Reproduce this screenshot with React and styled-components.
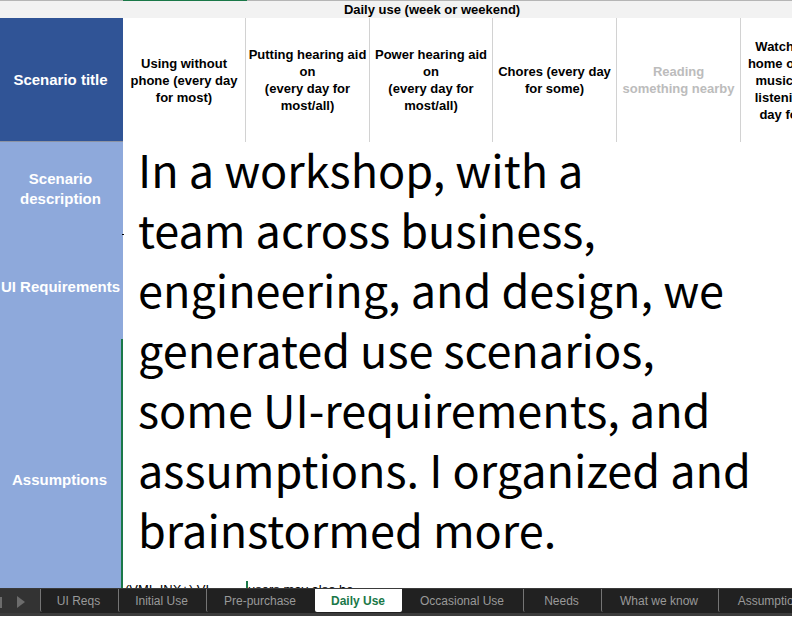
import React from "react";
import styled, { createGlobalStyle } from "styled-components";

const GlobalStyle = createGlobalStyle`
  * { box-sizing: border-box; }
  body { margin: 0; background: #fff; font-family: "Liberation Sans", Arial, sans-serif; }
`;

const Page = styled.div`
  display: flex;
  flex-direction: column;
  height: 100vh;
  padding-bottom: 5px;
  overflow: hidden;
`;

const Sheet = styled.main`
  flex: 1;
  min-height: 0;
  overflow: hidden;
`;

const Grid = styled.table`
  width: 109%;
  min-width: 864px;
  table-layout: fixed;
  border-collapse: separate;
  border-spacing: 0;
`;

const Column = styled.col`
  width: ${(p) => p.$width}px;
`;

const Band = styled.th`
  height: 18px;
  padding: 0;
  background: #f2f2f2;
  border-top: 1px solid #b5b5b5;
`;

const BandTitle = styled(Band)`
  position: relative;
  padding-top: 1px;
  font-size: 13px;
  line-height: 16px;

  &::before {
    content: "";
    position: absolute;
    top: -1px;
    left: 0;
    width: 20%;
    height: 1px;
    background: #1a7848;
  }
`;

const ScenarioHead = styled.th`
  height: 123px;
  padding: 0 2px;
  border-right: 1px solid #d2d2d2;
  color: ${(p) => (p.$muted ? "#bcbcbc" : "#000")};
  font-size: 13px;
  line-height: 17px;
  white-space: pre-line;
`;

const RowHead = styled.th`
  position: relative;
  height: ${(p) => p.$height}px;
  padding: 0 2px 0 0;
  background: ${(p) => (p.$primary ? "#305496" : "#8ea9db")};
  border-bottom: ${(p) => (p.$primary ? "1px solid #8c93a3" : "0")};
  border-right: ${(p) => (p.$selected ? "2px solid #1a7848" : "0")};
  color: #fff;
  font-size: 15px;
  line-height: 20px;
`;

const DescriptionHead = styled(RowHead)`
  &::after {
    content: "";
    position: absolute;
    right: -1px;
    bottom: 0;
    width: 2px;
    height: 1px;
    background: #000;
  }
`;

const NoteCell = styled.td`
  padding: 0;
  vertical-align: top;
`;

const Note = styled.p`
  margin: -3px 0 0;
  padding: 0 0 22px 15px;
  font-family: "Noto Sans CJK SC", "Noto Sans", sans-serif;
  font-size: 45px;
  line-height: 60px;
  white-space: pre-line;
`;

const CellTexts = styled.div`
  display: grid;
  grid-template-columns: 121px 1fr;
  padding-left: 2px;
  font-size: 13px;
  line-height: 17px;
`;

const CellText = styled.span`
  border-left: ${(p) => (p.$selected ? "2px solid #1a7848" : "0")};
`;

const TabBar = styled.nav`
  display: flex;
  flex: none;
  height: 28px;
  overflow: hidden;
  background: #212121;
  border-top: 1px solid #3a3a3a;
  border-bottom: 3px solid #3c3c3c;
`;

const Scrollers = styled.div`
  display: flex;
  flex: none;
  width: 40px;
  background: #333;
`;

const ScrollButton = styled.button`
  width: ${(p) => p.$width}px;
  padding: 2px 0 0;
  border: 0;
  background: none;
  line-height: 0;
`;

const Tab = styled.button`
  flex: none;
  width: ${(p) => p.$width}px;
  height: 23px;
  padding: 0 2px 0 0;
  border: 0;
  border-left: 1px solid ${(p) => (p.$divider ? "#757575" : "transparent")};
  border-radius: 0 0 2px 2px;
  background: ${(p) => (p.$active ? "#fff" : "none")};
  color: ${(p) => (p.$active ? "#1a7848" : "#999")};
  font-family: "Liberation Sans", Arial, sans-serif;
  font-size: 12px;
  font-weight: ${(p) => (p.$active ? 700 : 400)};
  white-space: nowrap;
`;

const columns = [123, 123, 124, 123, 124, 124, 123];

const scenarios = [
  { title: "Using without phone (every day for most)" },
  { title: "Putting hearing aid on\n(every day for most/all)" },
  { title: "Power hearing aid on\n(every day for most/all)" },
  { title: "Chores (every day for some)" },
  { title: "Reading something nearby", muted: true },
  { title: "Watching TV at\nhome or enjoying\nmusic (passive\nlistening, every\nday for some)" },
];

const note = `In a workshop, with a
team across business,
engineering, and design, we
generated use scenarios,
some UI-requirements, and
assumptions. I organized and
brainstormed more.`;

const tabs = [
  { label: "UI Reqs", width: 78, divider: true },
  { label: "Initial Use", width: 88, divider: true },
  { label: "Pre-purchase", width: 109, divider: true },
  { label: "Daily Use", width: 87, active: true },
  { label: "Occasional Use", width: 121 },
  { label: "Needs", width: 78, divider: true },
  { label: "What we know", width: 117, divider: true },
  { label: "Assumptions", width: 109, divider: true },
];

export default function App() {
  return (
    <Page>
      <GlobalStyle />
      <Sheet>
        <Grid>
          <colgroup>
            {columns.map((width, i) => <Column key={i} $width={width} />)}
          </colgroup>
          <thead>
            <tr>
              <Band />
              <BandTitle colSpan={5} scope="colgroup">Daily use (week or weekend)</BandTitle>
              <Band />
            </tr>
            <tr>
              <RowHead $primary $height={124} scope="row">Scenario title</RowHead>
              {scenarios.map((s) => (
                <ScenarioHead key={s.title} $muted={s.muted} scope="col">{s.title}</ScenarioHead>
              ))}
            </tr>
          </thead>
          <tbody>
            <tr>
              <DescriptionHead $height={93} scope="row">Scenario description</DescriptionHead>
              <NoteCell rowSpan={3} colSpan={6}>
                <Note>{note}</Note>
                <CellTexts>
                  <CellText>(VMI, INX+) VI</CellText>
                  <CellText $selected>users may also be</CellText>
                </CellTexts>
              </NoteCell>
            </tr>
            <tr><RowHead $height={104} scope="row">UI Requirements</RowHead></tr>
            <tr><RowHead $height={281} $selected scope="row">Assumptions</RowHead></tr>
          </tbody>
        </Grid>
      </Sheet>
      <TabBar aria-label="Sheets">
        <Scrollers>
          <ScrollButton $width={10} aria-label="Previous sheets">
            <svg width="10" height="12" viewBox="0 0 10 12"><path d="M0 1h2v11H0z" fill="#6c6c6c" /></svg>
          </ScrollButton>
          <ScrollButton $width={22} aria-label="Next sheets">
            <svg width="10" height="12" viewBox="0 0 10 12"><path d="M1 0l8 6L1 12z" fill="#6c6c6c" /></svg>
          </ScrollButton>
        </Scrollers>
        {tabs.map((t) => (
          <Tab key={t.label} $width={t.width} $divider={t.divider} $active={t.active} aria-current={t.active ? "page" : undefined}>
            {t.label}
          </Tab>
        ))}
      </TabBar>
    </Page>
  );
}
